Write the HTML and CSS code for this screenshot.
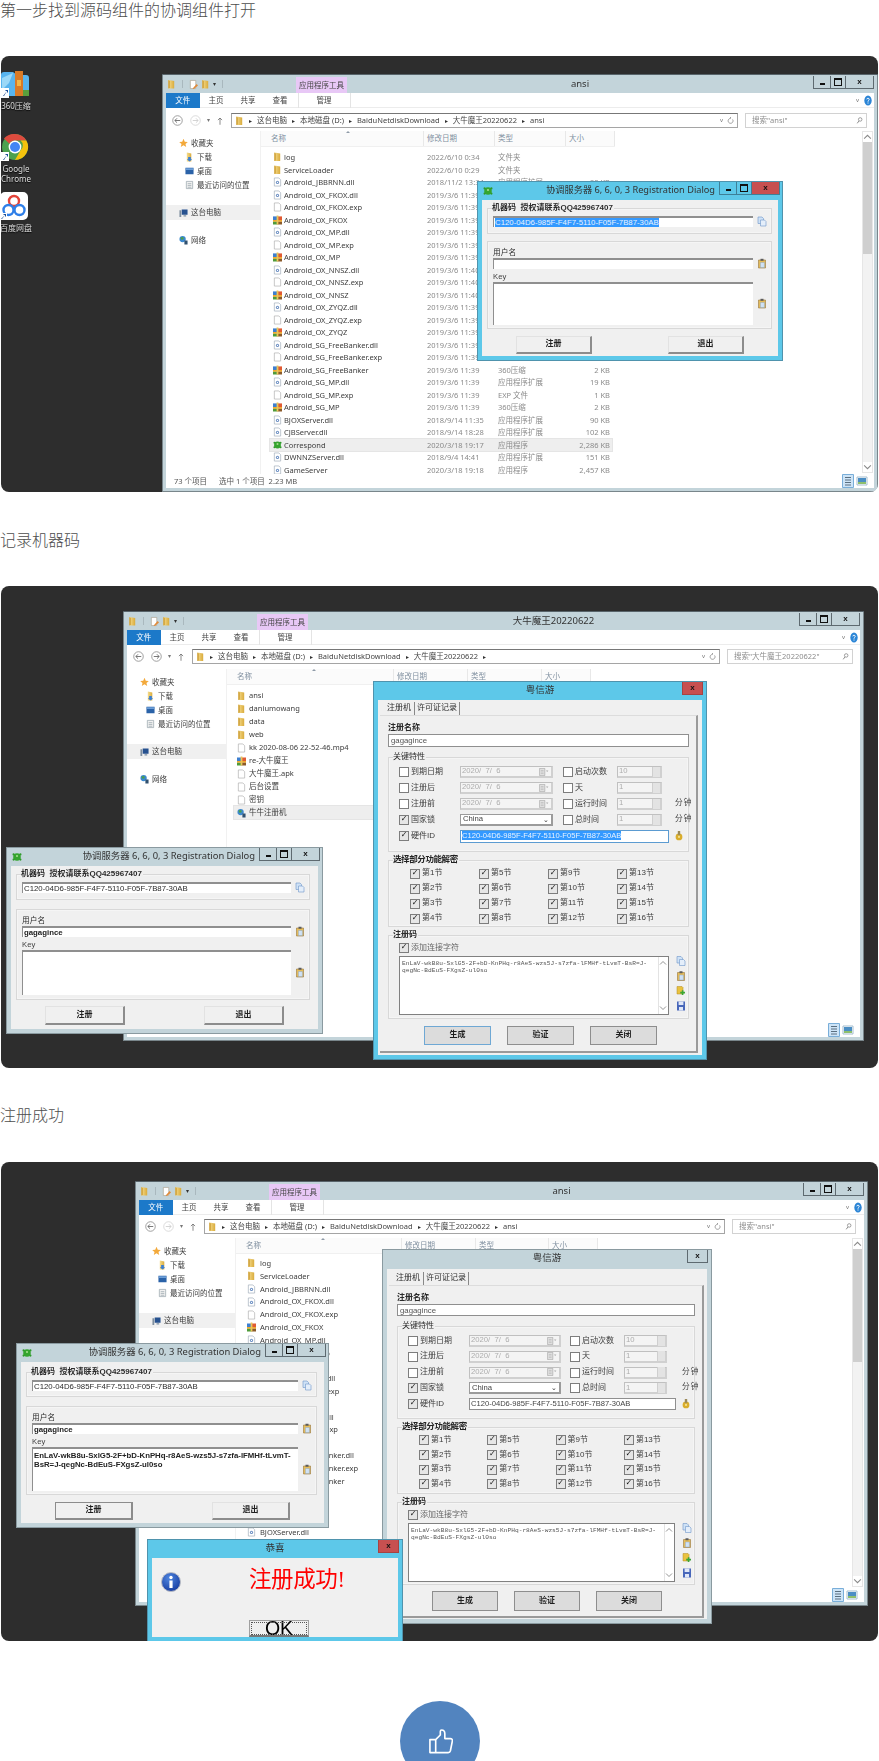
FILE: index.html
```html
<!DOCTYPE html>
<html lang="zh">
<head>
<meta charset="utf-8">
<title>协调组件注册</title>
<link rel="stylesheet" href="styles.css">
</head>
<body>
<svg class="defs" width="0" height="0" aria-hidden="true">
  <defs>
    <linearGradient id="gf" x1="0" x2="1" y1="0" y2="0"><stop offset="0" stop-color="#f6dd8e"/><stop offset="1" stop-color="#d9ab3c"/></linearGradient>
    <radialGradient id="gi" cx=".4" cy=".3" r=".8"><stop offset="0" stop-color="#4f86e0"/><stop offset="1" stop-color="#12369a"/></radialGradient>
    <symbol id="folder" viewBox="0 0 10 10"><path fill="url(#gf)" d="M1.5 0 8 1v8.5H1.5z"/><path fill="#c9982e" d="M1.5 0v9.5L3 9V1z"/></symbol>
    <symbol id="dll" viewBox="0 0 10 10"><path fill="#fff" stroke="#9aa7b5" stroke-width=".7" d="M1.5.5h5l2 2v7h-7z"/><circle cx="5" cy="5.5" r="1.8" fill="#6d90c4"/><circle cx="5" cy="5.5" r=".7" fill="#fff"/></symbol>
    <symbol id="file" viewBox="0 0 10 10"><path fill="#fff" stroke="#a9a9a9" stroke-width=".7" d="M1.5.5h5l2 2v7h-7z"/></symbol>
    <symbol id="zip" viewBox="0 0 10 10"><path fill="#3d7fd0" d="M0 1h5v4H0z"/><path fill="#e05a33" d="M5 1h5v4H5z"/><path fill="#f0a92d" d="M0 5h10v2H0z"/><path fill="#4f9b3a" d="M0 7h5v3H0z"/><path fill="#8a5a2a" d="M5 7h5v3H5z"/><path fill="#e9c65a" d="M4 0h2v10H4z"/></symbol>
    <symbol id="turtle" viewBox="0 0 10 10"><circle cx="5" cy="5" r="3.8" fill="#35a52e"/><circle cx="1.6" cy="2.4" r="1.1" fill="#2f9a2a"/><circle cx="8.4" cy="2.4" r="1.1" fill="#2f9a2a"/><circle cx="1.6" cy="7.6" r="1.1" fill="#2f9a2a"/><circle cx="8.4" cy="7.6" r="1.1" fill="#2f9a2a"/><circle cx="5" cy="4" r="1.1" fill="#a5dd8e"/></symbol>
    <symbol id="paste" viewBox="0 0 10 10"><path fill="#e6bd5a" stroke="#97753a" stroke-width=".6" d="M1.5 1.5h7v8h-7z"/><path fill="#5c5c5c" d="M3.5.3h3v2h-3z"/><path fill="#cfe2f6" stroke="#7d9fc6" stroke-width=".4" d="M3.4 4h4v5h-4z"/></symbol>
    <symbol id="copy" viewBox="0 0 10 10"><path fill="#cfe2f6" stroke="#6d96c9" stroke-width=".6" d="M1 .5h4l1.5 1.5v5H1z"/><path fill="#e4eefa" stroke="#6d96c9" stroke-width=".6" d="M3.5 3.5h4L9 5v4.5H3.5z"/></symbol>
    <symbol id="addf" viewBox="0 0 10 10"><path fill="#e9c23f" stroke="#b28b22" stroke-width=".5" d="M1 .5h5l1 1V8H1z"/><path fill="#3ba635" d="M5.8 4.2h1.6v1.6H9v1.6H7.4V9H5.8V7.4H4.2V5.8h1.6z"/></symbol>
    <symbol id="save" viewBox="0 0 10 10"><path fill="#4867ba" d="M1 .5h8v9H1z"/><path fill="#dfe7f7" d="M2.6.5h4.8v3.4H2.6zM3 6h4v3.5H3z"/></symbol>
    <symbol id="key" viewBox="0 0 10 10"><circle cx="5" cy="6.4" r="3.4" fill="#d9ad2c"/><path fill="#9b8a5a" d="M3.8.4h2.4v4H3.8z"/><circle cx="5" cy="6.4" r="1.1" fill="#f3df8f"/></symbol>
    <symbol id="star" viewBox="0 0 10 10"><path fill="#f3a93b" d="m5 .3 1.4 3.2 3.4.3-2.6 2.2.8 3.4L5 7.6 2 9.400l.8-3.400L.2 3.800l3.400-.3z"/></symbol>
    <symbol id="dl" viewBox="0 0 10 10"><path fill="url(#gf)" d="M2 0 7 1v9H2z"/><path fill="#3a7fd3" d="M3.500 5h3v2.500H8L5 10 2 7.500h1.500z"/></symbol>
    <symbol id="desk" viewBox="0 0 10 10"><path fill="#2a62a8" d="M.5 1.500h9v7h-9z"/><path fill="#6d9fd8" d="M1 2h8v2H1z"/></symbol>
    <symbol id="recent" viewBox="0 0 10 10"><path fill="#f1f1f1" stroke="#8c9aa3" stroke-width=".7" d="M1.500 1h7v8h-7z"/><path stroke="#8c9aa3" stroke-width=".7" d="M3 3.500h4M3 5.500h4M3 7.500h4"/></symbol>
    <symbol id="pc" viewBox="0 0 10 10"><path fill="#26518f" d="M3 1h6.500v6H3z"/><path fill="#7f8f9f" d="M.5 2H2.500v7.500H.5zM5 7.500h3V9H5z"/></symbol>
    <symbol id="net" viewBox="0 0 10 10"><circle cx="4" cy="4" r="3.500" fill="#3c89cf"/><path fill="#4c9f45" d="M2 2h3v2.500H2z"/><path fill="#30506f" d="M6 5.500h3.500V10H6z"/></symbol>
    <symbol id="doc" viewBox="0 0 10 10"><path fill="#fff" stroke="#aa9f8d" stroke-width=".7" d="M1.500.5h6v9h-6z"/><path fill="#e08a3a" d="m4 9.500 4.500-5L10 6l-4.500 4z"/></symbol>
    <symbol id="back" viewBox="0 0 12 12"><circle cx="6" cy="6" r="5.200" fill="#fff" stroke="#8d8d8d" stroke-width=".9"/><path fill="none" stroke="#6d6d6d" stroke-width="1" d="M9 6H3.200M5.500 3.600 3.100 6l2.400 2.400"/></symbol>
    <symbol id="fwd" viewBox="0 0 12 12"><circle cx="6" cy="6" r="5.200" fill="#fff" stroke="#8d8d8d" stroke-width=".9"/><path fill="none" stroke="#6d6d6d" stroke-width="1" d="M3 6h5.800M6.500 3.600 8.900 6 6.500 8.400"/></symbol>
    <symbol id="fwdg" viewBox="0 0 12 12"><circle cx="6" cy="6" r="5.200" fill="#fff" stroke="#d5d5d5" stroke-width=".9"/><path fill="none" stroke="#d0d0d0" stroke-width="1" d="M3 6h5.800M6.500 3.600 8.900 6 6.500 8.400"/></symbol>
    <symbol id="up" viewBox="0 0 8 12"><path fill="none" stroke="#666" stroke-width="1" d="M4 11V2M1.200 4.800 4 2l2.800 2.800"/></symbol>
    <symbol id="refresh" viewBox="0 0 10 12"><path fill="none" stroke="#777" stroke-width="1" d="M8 4.500A3.500 3.500 0 1 1 5 3V1"/></symbol>
    <symbol id="lens" viewBox="0 0 10 12"><circle cx="6" cy="4.500" r="2.500" fill="none" stroke="#777"/><path stroke="#777" stroke-width="1.200" d="M4 6.800 1.800 10"/></symbol>
    <symbol id="qm" viewBox="0 0 10 14"><ellipse cx="5" cy="7" rx="4.600" ry="6.400" fill="#2b85d6"/><path fill="none" stroke="#fff" stroke-width="1.200" d="M3.500 5.500C3.500 3.700 6.500 3.700 6.500 5.500 6.500 7 5 6.800 5 8.500"/><path stroke="#fff" stroke-width="1.200" d="M5 9.500v1.300"/></symbol>
    <symbol id="vdet" viewBox="0 0 12 14"><path fill="#cde4f7" stroke="#79aed9" d="M.5.500h11v13H.5z"/><path stroke="#5a6f80" d="M3 3.500h6M3 6h6M3 8.500h6M3 11h6"/></symbol>
    <symbol id="vthumb" viewBox="0 0 12 14"><path fill="#fff" stroke="#a3bdcf" d="M1 3h10v8H1z"/><path fill="#4b8ec4" d="M2 4h8v6H2z"/><path fill="#8ebf6c" d="M2 8h8v2H2z"/></symbol>
    <symbol id="sa-up" viewBox="0 0 8 6"><path fill="none" stroke="#888" stroke-width=".9" d="M1 4.500 4 1.500l3 3"/></symbol>
    <symbol id="sa-dn" viewBox="0 0 8 6"><path fill="none" stroke="#888" stroke-width=".9" d="M1 1.500 4 4.500l3-3"/></symbol>
    <symbol id="cal" viewBox="0 0 12 10"><path fill="#e3e3e3" stroke="#999" stroke-width=".7" d="M.5.500h6.500v9H.5z"/><path stroke="#aaa" stroke-width=".7" d="M2 3h3.500M2 5h3.500M2 7h3.500"/><path fill="#aaa" d="m8.500 3 3 0L10 5z"/></symbol>
  </defs>
</svg>

<p class="para first">第一步找到源码组件的协调组件打开</p>

<figure class="shot shot-1">
  <div class="desk">
    <div class="dicon">
      <svg class="dglyph" viewBox="0 0 28 28"><path fill="#58b4ee" d="M0 5q0-3 3-3h9l4 3h9q3 0 3 3v15q0 3-3 3H3q-3 0-3-3z"/><path fill="#9bd8f7" d="M1 8 12 3l-4 10-7 7z"/><path fill="#d97a26" d="M14 1h8v25h-8z"/><path fill="#f2b545" d="M16 10h4v6h-4z"/><path fill="#5a9f3c" d="M22 20h6v6h-6z"/><path fill="#fff" d="M0 18h8v10H0z"/><path fill="#1d4f96" d="M2 26l4-5-2 0 1-1h2v2l-1 1v-2l-3 5z"/></svg>
      <span>360压缩</span>
    </div>
    <div class="dicon chrome">
      <svg class="dglyph" viewBox="0 0 28 28"><circle cx="14" cy="14" r="13" fill="#4ca14f"/><path fill="#dd4b3e" d="M14 1a13 13 0 0 1 11.300 6.500H14a6.500 6.500 0 0 0-5.600 3.200L3 5.500A13 13 0 0 1 14 1z"/><path fill="#f4c20d" d="M25.300 7.500A13 13 0 0 1 14 27l5.600-9.700a6.500 6.500 0 0 0 0-9.800z"/><circle cx="14" cy="14" r="6.400" fill="#fff"/><circle cx="14" cy="14" r="5" fill="#4285f4"/><path fill="#fff" d="M0 19h8v9H0z"/><path fill="#1d4f96" d="M2 27l4-5-2 0 1-1h2v2l-1 1v-2l-3 5z"/></svg>
      <span>Google<br>Chrome</span>
    </div>
    <div class="dicon baidu">
      <svg class="dglyph" viewBox="0 0 28 28"><rect width="28" height="28" rx="5" fill="#fff"/><circle cx="14" cy="9" r="5" fill="none" stroke="#e4443a" stroke-width="2.400"/><circle cx="8.500" cy="18" r="5" fill="none" stroke="#2f7fe8" stroke-width="2.400"/><circle cx="19.500" cy="18" r="5" fill="none" stroke="#2f7fe8" stroke-width="2.400"/><path fill="#fff" d="M0 21h7v7H0z"/><path fill="#1d4f96" d="M1 27l4-4-2 0 1-1h2v2l-1 1v-2l-3 4z"/></svg>
      <span>百度网盘</span>
    </div>
  </div>

  <section class="explorer ex1">
    <header class="ex-title">
      <div class="qat"><svg><use href="#folder"/></svg><i></i><svg><use href="#doc"/></svg><svg><use href="#folder"/></svg><b>▾</b><i></i></div>
      <div class="ctx">应用程序工具</div>
      <div class="ex-name">ansi</div>
      <div class="wc"><span class="min"></span><span class="max"></span><span class="cls">x</span></div>
    </header>
    <nav class="ribbon"><span class="rfile">文件</span><span class="ri">主页</span><span class="ri">共享</span><span class="ri">查看</span><span class="rtab">管理</span><span class="rend"><em>v</em><svg><use href="#qm"/></svg></span></nav>
    <div class="addr-row">
      <div class="nav"><svg class="nb"><use href="#back"/></svg><svg class="nb"><use href="#fwdg"/></svg><em>▾</em><svg class="nu"><use href="#up"/></svg></div>
      <div class="addr"><svg><use href="#folder"/></svg><span>这台电脑</span><span>本地磁盘 (D:)</span><span>BaiduNetdiskDownload</span><span>大牛魔王20220622</span><span>ansi</span><div class="addr-end"><em>v</em><svg><use href="#refresh"/></svg></div></div>
      <div class="search"><span>搜索"ansi"</span><svg><use href="#lens"/></svg></div>
    </div>
    <div class="ex-main">
      <aside class="side">
        <div><svg><use href="#star"/></svg>收藏夹</div>
        <div class="sub"><svg><use href="#dl"/></svg>下载</div>
        <div class="sub"><svg><use href="#desk"/></svg>桌面</div>
        <div class="sub"><svg><use href="#recent"/></svg>最近访问的位置</div>
        <div class="pc"><svg><use href="#pc"/></svg>这台电脑</div>
        <div class="netw"><svg><use href="#net"/></svg>网络</div>
      </aside>
      <div class="list">
        <div class="hd"><span>名称</span><span>修改日期</span><span>类型</span><span>大小</span></div>
        <div class="rows">
          <div class="row"><svg><use href="#folder"/></svg><span>log</span><span>2022/6/10 0:34</span><span>文件夹</span></div>
          <div class="row"><svg><use href="#folder"/></svg><span>ServiceLoader</span><span>2022/6/10 0:29</span><span>文件夹</span></div>
          <div class="row"><svg><use href="#dll"/></svg><span>Android_JBBRNN.dll</span><span>2018/11/2 13:34</span><span>应用程序扩展</span><span>90 KB</span></div>
          <div class="row"><svg><use href="#dll"/></svg><span>Android_OX_FKOX.dll</span><span>2019/3/6 11:39</span></div>
          <div class="row"><svg><use href="#file"/></svg><span>Android_OX_FKOX.exp</span><span>2019/3/6 11:39</span></div>
          <div class="row"><svg><use href="#zip"/></svg><span>Android_OX_FKOX</span><span>2019/3/6 11:39</span></div>
          <div class="row"><svg><use href="#dll"/></svg><span>Android_OX_MP.dll</span><span>2019/3/6 11:39</span></div>
          <div class="row"><svg><use href="#file"/></svg><span>Android_OX_MP.exp</span><span>2019/3/6 11:39</span></div>
          <div class="row"><svg><use href="#zip"/></svg><span>Android_OX_MP</span><span>2019/3/6 11:39</span></div>
          <div class="row"><svg><use href="#dll"/></svg><span>Android_OX_NNSZ.dll</span><span>2019/3/6 11:40</span></div>
          <div class="row"><svg><use href="#file"/></svg><span>Android_OX_NNSZ.exp</span><span>2019/3/6 11:40</span></div>
          <div class="row"><svg><use href="#zip"/></svg><span>Android_OX_NNSZ</span><span>2019/3/6 11:40</span></div>
          <div class="row"><svg><use href="#dll"/></svg><span>Android_OX_ZYQZ.dll</span><span>2019/3/6 11:39</span></div>
          <div class="row"><svg><use href="#file"/></svg><span>Android_OX_ZYQZ.exp</span><span>2019/3/6 11:39</span></div>
          <div class="row"><svg><use href="#zip"/></svg><span>Android_OX_ZYQZ</span><span>2019/3/6 11:39</span></div>
          <div class="row"><svg><use href="#dll"/></svg><span>Android_SG_FreeBanker.dll</span><span>2019/3/6 11:39</span></div>
          <div class="row"><svg><use href="#file"/></svg><span>Android_SG_FreeBanker.exp</span><span>2019/3/6 11:39</span></div>
          <div class="row"><svg><use href="#zip"/></svg><span>Android_SG_FreeBanker</span><span>2019/3/6 11:39</span><span>360压缩</span><span>2 KB</span></div>
          <div class="row"><svg><use href="#dll"/></svg><span>Android_SG_MP.dll</span><span>2019/3/6 11:39</span><span>应用程序扩展</span><span>19 KB</span></div>
          <div class="row"><svg><use href="#file"/></svg><span>Android_SG_MP.exp</span><span>2019/3/6 11:39</span><span>EXP 文件</span><span>1 KB</span></div>
          <div class="row"><svg><use href="#zip"/></svg><span>Android_SG_MP</span><span>2019/3/6 11:39</span><span>360压缩</span><span>2 KB</span></div>
          <div class="row"><svg><use href="#dll"/></svg><span>BJOXServer.dll</span><span>2018/9/14 11:35</span><span>应用程序扩展</span><span>90 KB</span></div>
          <div class="row"><svg><use href="#dll"/></svg><span>CJBServer.dll</span><span>2018/9/14 18:28</span><span>应用程序扩展</span><span>102 KB</span></div>
          <div class="row sel"><svg><use href="#turtle"/></svg><span>Correspond</span><span>2020/3/18 19:17</span><span>应用程序</span><span>2,286 KB</span></div>
          <div class="row"><svg><use href="#dll"/></svg><span>DWNNZServer.dll</span><span>2018/9/4 14:41</span><span>应用程序扩展</span><span>151 KB</span></div>
          <div class="row"><svg><use href="#dll"/></svg><span>GameServer</span><span>2020/3/18 19:18</span><span>应用程序</span><span>2,457 KB</span></div>
        </div>
      </div>
      <div class="sbar"><svg><use href="#sa-up"/></svg><div class="thumb"></div><svg><use href="#sa-dn"/></svg></div>
    </div>
    <footer class="status"><span>73 个项目</span><span>选中 1 个项目&nbsp; 2.23 MB</span><div class="views"><svg><use href="#vdet"/></svg><svg><use href="#vthumb"/></svg></div></footer>
  </section>

  <section class="dlg rd rd-a active">
    <header class="dlg-title"><svg><use href="#turtle"/></svg><h4>协调服务器 6, 6, 0, 3 Registration Dialog</h4><div class="wc"><span class="min"></span><span class="max"></span><span class="cls">x</span></div></header>
    <div class="rd-body">
      <div class="group g1"><b class="legend">机器码&nbsp; 授权请联系QQ425967407</b>
        <div class="line"><div class="in code"><mark>C120-04D6-985F-F4F7-5110-F05F-7B87-30AB</mark></div><svg><use href="#copy"/></svg></div>
      </div>
      <div class="group g2"><div class="lab">用户名</div>
        <div class="line"><div class="in"></div><svg><use href="#paste"/></svg></div>
        <div class="lab key">Key</div>
        <div class="line"><div class="in area"></div><svg><use href="#paste"/></svg></div>
      </div>
      <div class="btns"><button>注册</button><button>退出</button></div>
    </div>
  </section>
</figure>

<p class="para p2">记录机器码</p>

<figure class="shot shot-2">
  <section class="explorer ex2">
    <header class="ex-title">
      <div class="qat"><svg><use href="#folder"/></svg><i></i><svg><use href="#doc"/></svg><svg><use href="#folder"/></svg><b>▾</b><i></i></div>
      <div class="ctx">应用程序工具</div>
      <div class="ex-name">大牛魔王20220622</div>
      <div class="wc"><span class="min"></span><span class="max"></span><span class="cls">x</span></div>
    </header>
    <nav class="ribbon"><span class="rfile">文件</span><span class="ri">主页</span><span class="ri">共享</span><span class="ri">查看</span><span class="rtab">管理</span><span class="rend"><em>v</em><svg><use href="#qm"/></svg></span></nav>
    <div class="addr-row">
      <div class="nav"><svg class="nb"><use href="#back"/></svg><svg class="nb"><use href="#fwd"/></svg><em>▾</em><svg class="nu"><use href="#up"/></svg></div>
      <div class="addr"><svg><use href="#folder"/></svg><span>这台电脑</span><span>本地磁盘 (D:)</span><span>BaiduNetdiskDownload</span><span>大牛魔王20220622</span><span>&nbsp;</span><div class="addr-end"><em>v</em><svg><use href="#refresh"/></svg></div></div>
      <div class="search"><span>搜索"大牛魔王20220622"</span><svg><use href="#lens"/></svg></div>
    </div>
    <div class="ex-main">
      <aside class="side">
        <div><svg><use href="#star"/></svg>收藏夹</div>
        <div class="sub"><svg><use href="#dl"/></svg>下载</div>
        <div class="sub"><svg><use href="#desk"/></svg>桌面</div>
        <div class="sub"><svg><use href="#recent"/></svg>最近访问的位置</div>
        <div class="pc"><svg><use href="#pc"/></svg>这台电脑</div>
        <div class="netw"><svg><use href="#net"/></svg>网络</div>
      </aside>
      <div class="list">
        <div class="hd"><span>名称</span><span>修改日期</span><span>类型</span><span>大小</span></div>
        <div class="rows">
          <div class="row"><svg><use href="#folder"/></svg><span>ansi</span></div>
          <div class="row"><svg><use href="#folder"/></svg><span>daniumowang</span></div>
          <div class="row"><svg><use href="#folder"/></svg><span>data</span></div>
          <div class="row"><svg><use href="#folder"/></svg><span>web</span></div>
          <div class="row"><svg><use href="#file"/></svg><span>kk 2020-08-06 22-52-46.mp4</span></div>
          <div class="row"><svg><use href="#zip"/></svg><span>re-大牛魔王</span></div>
          <div class="row"><svg><use href="#file"/></svg><span>大牛魔王.apk</span></div>
          <div class="row"><svg><use href="#file"/></svg><span>后台设置</span></div>
          <div class="row"><svg><use href="#file"/></svg><span>密钥</span></div>
          <div class="row sel"><svg><use href="#net"/></svg><span>牛牛注册机</span></div>
        </div>
      </div>
    </div>
    <footer class="status"><div class="views"><svg><use href="#vdet"/></svg><svg><use href="#vthumb"/></svg></div></footer>
  </section>

  <section class="dlg yx yx-a active">
    <header class="yx-title"><h4>粤信游</h4><span class="cls">x</span></header>
    <div class="yx-body">
      <div class="tabs"><span class="on">注册机</span><span>许可证记录</span></div>
      <div class="panel">
        <b class="fld">注册名称</b>
        <div class="in nm">gagagince</div>
        <div class="group feat"><span class="legend">关键特性</span>
          <label class="ck">到期日期</label><div class="date">2020/ &nbsp;7/ &nbsp;6<svg><use href="#cal"/></svg></div><label class="ck">启动次数</label><div class="spin">10<em></em></div><span></span>
          <label class="ck">注册后</label><div class="date">2020/ &nbsp;7/ &nbsp;6<svg><use href="#cal"/></svg></div><label class="ck">天</label><div class="spin">1<em></em></div><span></span>
          <label class="ck">注册前</label><div class="date">2020/ &nbsp;7/ &nbsp;6<svg><use href="#cal"/></svg></div><label class="ck">运行时间</label><div class="spin">1<em></em></div><span class="mins">分钟</span>
          <label class="ck on">国家锁</label><div class="date sel">China<u>⌄</u></div><label class="ck">总时间</label><div class="spin">1<em></em></div><span class="mins">分钟</span>
          <label class="ck on">硬件ID</label><div class="in hw focus"><mark>C120-04D6-985F-F4F7-5110-F05F-7B87-30AB</mark></div><svg class="keyi"><use href="#key"/></svg>
        </div>
        <div class="group secs"><span class="legend">选择部分功能解密</span>
          <label class="ck on">第1节</label><label class="ck on">第5节</label><label class="ck on">第9节</label><label class="ck on">第13节</label>
          <label class="ck on">第2节</label><label class="ck on">第6节</label><label class="ck on">第10节</label><label class="ck on">第14节</label>
          <label class="ck on">第3节</label><label class="ck on">第7节</label><label class="ck on">第11节</label><label class="ck on">第15节</label>
          <label class="ck on">第4节</label><label class="ck on">第8节</label><label class="ck on">第12节</label><label class="ck on">第16节</label>
        </div>
        <div class="group code-g"><b class="legend">注册码</b>
          <label class="ck on">添加连接字符</label>
          <div class="code-row">
            <div class="in mono">EnLaV-wkB8u-SxlG5-2F+bD-KnPHq-r8AeS-wzs5J-s7zfa-lFMHf-tLvmT-BsR=J-<br>qegNc-BdEuS-FXgsZ-ul0so<div class="vs"><svg><use href="#sa-up"/></svg><svg><use href="#sa-dn"/></svg></div></div>
            <div class="tools"><svg><use href="#copy"/></svg><svg><use href="#paste"/></svg><svg><use href="#addf"/></svg><svg><use href="#save"/></svg></div>
          </div>
        </div>
        <div class="yx-btns"><button class="def">生成</button><button>验证</button><button>关闭</button></div>
      </div>
    </div>
  </section>

  <section class="dlg rd rd-b">
    <header class="dlg-title"><svg><use href="#turtle"/></svg><h4>协调服务器 6, 6, 0, 3 Registration Dialog</h4><div class="wc"><span class="min"></span><span class="max"></span><span class="cls">x</span></div></header>
    <div class="rd-body">
      <div class="group g1"><b class="legend">机器码&nbsp; 授权请联系QQ425967407</b>
        <div class="line"><div class="in code">C120-04D6-985F-F4F7-5110-F05F-7B87-30AB</div><svg><use href="#copy"/></svg></div>
      </div>
      <div class="group g2"><div class="lab">用户名</div>
        <div class="line"><div class="in strong">gagagince</div><svg><use href="#paste"/></svg></div>
        <div class="lab key">Key</div>
        <div class="line"><div class="in area"></div><svg><use href="#paste"/></svg></div>
      </div>
      <div class="btns"><button>注册</button><button>退出</button></div>
    </div>
  </section>
</figure>

<p class="para p3">注册成功</p>

<figure class="shot shot-3">
  <section class="explorer ex3">
    <header class="ex-title">
      <div class="qat"><svg><use href="#folder"/></svg><i></i><svg><use href="#doc"/></svg><svg><use href="#folder"/></svg><b>▾</b><i></i></div>
      <div class="ctx">应用程序工具</div>
      <div class="ex-name">ansi</div>
      <div class="wc"><span class="min"></span><span class="max"></span><span class="cls">x</span></div>
    </header>
    <nav class="ribbon"><span class="rfile">文件</span><span class="ri">主页</span><span class="ri">共享</span><span class="ri">查看</span><span class="rtab">管理</span><span class="rend"><em>v</em><svg><use href="#qm"/></svg></span></nav>
    <div class="addr-row">
      <div class="nav"><svg class="nb"><use href="#back"/></svg><svg class="nb"><use href="#fwdg"/></svg><em>▾</em><svg class="nu"><use href="#up"/></svg></div>
      <div class="addr"><svg><use href="#folder"/></svg><span>这台电脑</span><span>本地磁盘 (D:)</span><span>BaiduNetdiskDownload</span><span>大牛魔王20220622</span><span>ansi</span><div class="addr-end"><em>v</em><svg><use href="#refresh"/></svg></div></div>
      <div class="search"><span>搜索"ansi"</span><svg><use href="#lens"/></svg></div>
    </div>
    <div class="ex-main">
      <aside class="side">
        <div><svg><use href="#star"/></svg>收藏夹</div>
        <div class="sub"><svg><use href="#dl"/></svg>下载</div>
        <div class="sub"><svg><use href="#desk"/></svg>桌面</div>
        <div class="sub"><svg><use href="#recent"/></svg>最近访问的位置</div>
        <div class="pc"><svg><use href="#pc"/></svg>这台电脑</div>
        <div class="netw"><svg><use href="#net"/></svg>网络</div>
      </aside>
      <div class="list">
        <div class="hd"><span>名称</span><span>修改日期</span><span>类型</span><span>大小</span></div>
        <div class="rows">
          <div class="row"><svg><use href="#folder"/></svg><span>log</span></div>
          <div class="row"><svg><use href="#folder"/></svg><span>ServiceLoader</span></div>
          <div class="row"><svg><use href="#dll"/></svg><span>Android_JBBRNN.dll</span></div>
          <div class="row"><svg><use href="#dll"/></svg><span>Android_OX_FKOX.dll</span></div>
          <div class="row"><svg><use href="#file"/></svg><span>Android_OX_FKOX.exp</span></div>
          <div class="row"><svg><use href="#zip"/></svg><span>Android_OX_FKOX</span></div>
          <div class="row"><svg><use href="#dll"/></svg><span>Android_OX_MP.dll</span></div>
          <div class="row"><svg><use href="#file"/></svg><span>Android_OX_MP.exp</span></div>
          <div class="row"><svg><use href="#zip"/></svg><span>Android_OX_MP</span></div>
          <div class="row"><svg><use href="#dll"/></svg><span>Android_OX_NNSZ.dll</span></div>
          <div class="row"><svg><use href="#file"/></svg><span>Android_OX_NNSZ.exp</span></div>
          <div class="row"><svg><use href="#zip"/></svg><span>Android_OX_NNSZ</span></div>
          <div class="row"><svg><use href="#dll"/></svg><span>Android_OX_ZYQZ.dll</span></div>
          <div class="row"><svg><use href="#file"/></svg><span>Android_OX_ZYQZ.exp</span></div>
          <div class="row"><svg><use href="#zip"/></svg><span>Android_OX_ZYQZ</span></div>
          <div class="row"><svg><use href="#dll"/></svg><span>Android_SG_FreeBanker.dll</span></div>
          <div class="row"><svg><use href="#file"/></svg><span>Android_SG_FreeBanker.exp</span></div>
          <div class="row"><svg><use href="#zip"/></svg><span>Android_SG_FreeBanker</span></div>
          <div class="row"><svg><use href="#dll"/></svg><span>Android_SG_MP.dll</span></div>
          <div class="row"><svg><use href="#file"/></svg><span>Android_SG_MP.exp</span></div>
          <div class="row"><svg><use href="#zip"/></svg><span>Android_SG_MP</span></div>
          <div class="row"><svg><use href="#dll"/></svg><span>BJOXServer.dll</span></div>
        </div>
      </div>
      <div class="sbar"><svg><use href="#sa-up"/></svg><div class="thumb"></div><svg><use href="#sa-dn"/></svg></div>
    </div>
    <footer class="status"><div class="views"><svg><use href="#vdet"/></svg><svg><use href="#vthumb"/></svg></div></footer>
  </section>

  <section class="dlg yx yx-b">
    <header class="yx-title"><h4>粤信游</h4><span class="cls">x</span></header>
    <div class="yx-body">
      <div class="tabs"><span class="on">注册机</span><span>许可证记录</span></div>
      <div class="panel">
        <b class="fld">注册名称</b>
        <div class="in nm">gagagince</div>
        <div class="group feat"><span class="legend">关键特性</span>
          <label class="ck">到期日期</label><div class="date">2020/ &nbsp;7/ &nbsp;6<svg><use href="#cal"/></svg></div><label class="ck">启动次数</label><div class="spin">10<em></em></div><span></span>
          <label class="ck">注册后</label><div class="date">2020/ &nbsp;7/ &nbsp;6<svg><use href="#cal"/></svg></div><label class="ck">天</label><div class="spin">1<em></em></div><span></span>
          <label class="ck">注册前</label><div class="date">2020/ &nbsp;7/ &nbsp;6<svg><use href="#cal"/></svg></div><label class="ck">运行时间</label><div class="spin">1<em></em></div><span class="mins">分钟</span>
          <label class="ck on">国家锁</label><div class="date sel">China<u>⌄</u></div><label class="ck">总时间</label><div class="spin">1<em></em></div><span class="mins">分钟</span>
          <label class="ck on">硬件ID</label><div class="in hw">C120-04D6-985F-F4F7-5110-F05F-7B87-30AB</div><svg class="keyi"><use href="#key"/></svg>
        </div>
        <div class="group secs"><span class="legend">选择部分功能解密</span>
          <label class="ck on">第1节</label><label class="ck on">第5节</label><label class="ck on">第9节</label><label class="ck on">第13节</label>
          <label class="ck on">第2节</label><label class="ck on">第6节</label><label class="ck on">第10节</label><label class="ck on">第14节</label>
          <label class="ck on">第3节</label><label class="ck on">第7节</label><label class="ck on">第11节</label><label class="ck on">第15节</label>
          <label class="ck on">第4节</label><label class="ck on">第8节</label><label class="ck on">第12节</label><label class="ck on">第16节</label>
        </div>
        <div class="group code-g"><b class="legend">注册码</b>
          <label class="ck on">添加连接字符</label>
          <div class="code-row">
            <div class="in mono">EnLaV-wkB8u-SxlG5-2F+bD-KnPHq-r8AeS-wzs5J-s7zfa-lFMHf-tLvmT-BsR=J-<br>qegNc-BdEuS-FXgsZ-ul0so<div class="vs"><svg><use href="#sa-up"/></svg><svg><use href="#sa-dn"/></svg></div></div>
            <div class="tools"><svg><use href="#copy"/></svg><svg><use href="#paste"/></svg><svg><use href="#addf"/></svg><svg><use href="#save"/></svg></div>
          </div>
        </div>
        <div class="yx-btns"><button>生成</button><button>验证</button><button>关闭</button></div>
      </div>
    </div>
  </section>

  <section class="dlg rd rd-c">
    <header class="dlg-title"><svg><use href="#turtle"/></svg><h4>协调服务器 6, 6, 0, 3 Registration Dialog</h4><div class="wc"><span class="min"></span><span class="max"></span><span class="cls">x</span></div></header>
    <div class="rd-body">
      <div class="group g1"><b class="legend">机器码&nbsp; 授权请联系QQ425967407</b>
        <div class="line"><div class="in code">C120-04D6-985F-F4F7-5110-F05F-7B87-30AB</div><svg><use href="#copy"/></svg></div>
      </div>
      <div class="group g2"><div class="lab">用户名</div>
        <div class="line"><div class="in strong">gagagince</div><svg><use href="#paste"/></svg></div>
        <div class="lab key">Key</div>
        <div class="line"><div class="in area strong">EnLaV-wkB8u-SxlG5-2F+bD-KnPHq-r8AeS-wzs5J-s7zfa-lFMHf-tLvmT-<br>BsR=J-qegNc-BdEuS-FXgsZ-ul0so</div><svg><use href="#paste"/></svg></div>
      </div>
      <div class="btns"><button class="def">注册</button><button>退出</button></div>
    </div>
  </section>

  <section class="dlg ok active">
    <header class="yx-title"><h4>恭喜</h4><span class="cls">x</span></header>
    <div class="ok-body">
      <svg class="info" viewBox="0 0 20 20"><circle cx="10" cy="10" r="9.500" fill="url(#gi)" stroke="#b9bcc4"/><circle cx="10" cy="5.500" r="1.700" fill="#fff"/><path fill="#fff" d="M8.400 8.500h3.200v7.500H8.400z"/></svg>
      <div class="ok-msg">注册成功!</div>
      <button class="ok-btn"><span>OK</span></button>
    </div>
  </section>
</figure>

<button class="like" aria-label="点赞">
  <svg viewBox="0 0 26 26"><path fill="none" stroke="#fff" stroke-width="1.700" stroke-linejoin="round" d="M8 11v13.500H2V11zM8 11l4.800-4.800V2.500c0-.8.500-1.500 1.400-1.500 2 0 3.300 1.800 3.300 4v5h5.700c1.500 0 2.400 1.200 2.100 2.600l-2 10c-.3 1.200-1 1.900-2.300 1.900H8"/></svg>
</button>
</body>
</html>
```

FILE: styles.css
```css
* { box-sizing: border-box; }
html, body { margin: 0; padding: 0; }
body {
  width: 879px;
  height: 1761px;
  overflow: hidden;
  background: #fff;
  font-family: "Noto Sans", "Noto Sans CJK SC", sans-serif;
}
.defs { position: absolute; }
.para {
  margin: 39px 0 37px;
  height: 18px;
  font: 300 16px/18px "Noto Sans CJK SC", sans-serif;
  color: #4d4d4d;
}
.para.first { margin-top: 0; margin-bottom: 38px; }
.para.p2 { margin-top: 38px; margin-bottom: 38px; }
.para.p3 { margin-top: 37px; margin-bottom: 39px; }

.shot {
  position: relative;
  margin: 0 0 0 1px;
  width: 877px;
  background: #2d2d2d;
  border-radius: 8px;
  overflow: hidden;
  filter: blur(.4px);
  font: 7.5px/1.1 "Noto Sans", "Noto Sans CJK SC", sans-serif;
  color: #333;
}
.shot-1 { height: 436px; }
.shot-2 { height: 482px; }
.shot-3 { height: 479px; }
svg { display: block; }

/* desktop */
.desk {
  position: absolute;
  left: 0;
  top: 14px;
  width: 30px;
  display: flex;
  flex-direction: column;
  align-items: center;
  color: #dedede;
  text-shadow: 0 1px 1px #000;
  font-size: 8px;
  line-height: 10px;
  text-align: center;
}
.dicon { height: 61px; }
.dicon span { display: block; white-space: nowrap; margin-top: 3px; }
.dglyph { width: 28px; height: 28px; }
.chrome { height: 61px; padding-top: 2px; }
.baidu { padding-top: 0; }

/* explorer */
.explorer {
  position: absolute;
  display: flex;
  flex-direction: column;
  background: #fff;
  border: solid #c3d4da;
  border-width: 0 4px 4px;
  outline: 1px solid rgba(60, 70, 75, .55);
  outline-offset: -1px;
}
.ex1 { left: 161px; top: 18px; width: 716px; height: 418px;
  --side: 95px; --hc: 163px 71px 71px 49px; --c: 11px 143px 71px 68px 44px; --rh: 12.5px; --lp: 4.7px; --pl: 3px; --ml: 9px;
  --a1: 5px; --a2: 3px; --sw: 122px; --mr: 7px; --sp: 5px; --thumb: 112px; --sbr: 1px; }
.ex2 { left: 122px; top: 25px; width: 741px; height: 430px;
  --side: 100px; --hc: 167px 74px 74px 49px; --c: 12px 300px; --rh: 13px; --lp: 4.500px; --pl: 3px; --ml: 7px;
  --a1: 4px; --a2: 5px; --sw: 126px; --mr: 7px; --sp: 6px; }
.ex3 { left: 134px; top: 19px; width: 733px; height: 425px;
  --side: 97px; --hc: 166px 74px 73px 49px; --c: 13px 300px; --rh: 12.8px; --lp: 3.600px; --pl: 3px; --ml: 8px;
  --a1: 4px; --a2: 4px; --sw: 124px; --mr: 8px; --sp: 6px; --thumb: 113px; --sbr: 1px; }

.ex-title {
  display: flex;
  height: 19px;
  margin: 0 -4px;
  padding-left: 5px;
  background: #c3d4da;
  border-top: 1px solid #7b8a90;
  align-items: flex-start;
}
.qat { width: 129px; height: 18px; display: flex; align-items: center; gap: 3px; }
.qat svg { width: 9px; height: 11px; }
.qat i { width: 1px; height: 8px; margin: 0 3px; background: #a9b8be; }
.qat b { font-size: 6px; font-weight: 400; color: #333; }
.ctx {
  width: 51px;
  height: 16px;
  margin-top: 2px;
  background: #e8c8f6;
  text-align: center;
  line-height: 16px;
  color: #444;
  white-space: nowrap;
}
.ex-name { flex: 1; text-align: center; font-size: 9.500px; line-height: 17px; color: #333; }

.wc {
  display: flex;
  height: 13px;
  margin-top: 1px;
  margin-right: 4px;
  border: solid #5e6a70;
  border-width: 0 1px 1px;
}
.wc span { display: flex; align-items: center; justify-content: center; height: 100%; }
.wc .min { width: 17px; border-right: 1px solid #5e6a70; }
.wc .min::before { content: ""; width: 5px; height: 2px; background: #111; margin-top: 3px; }
.wc .max { width: 15px; border-right: 1px solid #5e6a70; }
.wc .max::before { content: ""; width: 6px; height: 5px; border: 1px solid #111; border-top-width: 2px; }
.wc .cls { width: 27px; font: 700 8px/1 "Liberation Sans", sans-serif; color: #111; }

.ribbon {
  display: flex;
  height: 15px;
  align-items: center;
  border-bottom: 1px solid #ececec;
  font-size: 7.500px;
  color: #444;
}
.rfile {
  width: 33.500px;
  height: 15px;
  background: #1c79c9;
  color: #fff;
  text-align: center;
  line-height: 14px;
}
.ri { margin-left: 9px; margin-right: 8px; width: 15px; white-space: nowrap; }
.rtab {
  width: 53px;
  height: 15px;
  margin-left: 2px;
  border: solid #e4e4e4;
  border-width: 0 1px;
  text-align: center;
  line-height: 15px;
}
.rend { margin-left: auto; display: flex; align-items: center; gap: 5px; padding-right: 2px; color: #888; }
.rend em, .nav em, .addr-end em { font-style: normal; font-size: 6px; color: #777; }
.rend svg { width: 8px; height: 13px; }

.addr-row { display: flex; padding: var(--a1) var(--mr) var(--a2) 0; }
.nav { width: 65px; display: flex; align-items: center; padding-left: 6px; }
.nav .nb { width: 11px; height: 11px; margin-right: 7px; }
.nav .nb + em { margin-left: -1px; }
.nav em { margin-right: 7px; }
.nu { width: 6px; height: 10px; }
.addr {
  flex: 1;
  height: 15px;
  display: flex;
  align-items: center;
  border: 1px solid #a5a5a5;
  border-top-color: #777;
  padding-left: 3px;
  color: #444;
}
.addr > svg { width: 9px; height: 12px; margin-right: 5px; }
.addr span { white-space: nowrap; }
.addr span:not(:empty)::before { content: "▸"; font-size: 6px; margin-right: 5px; color: #333; }
.addr span + span { margin-left: 5px; }
.addr-end { margin-left: auto; display: flex; align-items: center; gap: 4px; padding-right: 3px; }
.addr-end svg { width: 7px; height: 9px; }
.search {
  width: var(--sw);
  height: 15px;
  margin-left: 7px;
  display: flex;
  align-items: center;
  justify-content: space-between;
  border: 1px solid #d2d2d2;
  padding: 0 3px 0 6px;
  color: #8d8d8d;
}
.search svg { width: 7px; height: 9px; }

.ex-main { flex: 1; min-height: 0; display: flex; }
.side { width: var(--side); padding-top: var(--sp); flex: none; border-right: 1px solid #f1f1f1; }
.side div {
  height: 14px;
  display: flex;
  align-items: center;
  gap: 3px;
  padding-left: 13px;
  white-space: nowrap;
  color: #3d3d3d;
}
.side svg { width: 9px; height: 10px; }
.side .sub { padding-left: 19px; }
.side .pc { margin-top: 13px; height: 15px; background: #f0f0f0; }
.side .netw { margin-top: 13px; }

.list { flex: 1; min-width: 0; overflow: hidden; }
.hd {
  position: relative;
  display: grid;
  grid-template-columns: var(--hc);
  width: max-content;
  height: 15.500px;
  background: #fbfbfb;
  border-bottom: 1px solid #f0f0f0;
  color: #8090a0;
  line-height: 14px;
}
.hd span { border-right: 1px solid #e8e8e8; padding-left: 3px; }
.hd span:first-child { padding-left: 10px; }
.hd::before {
  content: "";
  position: absolute;
  left: 85px;
  top: 0;
  border: 2px solid transparent;
  border-top-width: 0;
  border-bottom-color: #8f9ba8;
}
.rows { padding-top: var(--lp); }
.row {
  display: grid;
  grid-template-columns: var(--c);
  grid-auto-flow: column;
  justify-content: start;
  width: max-content;
  height: var(--rh);
  margin-left: var(--ml);
  padding-left: var(--pl);
  padding-right: 2px;
  align-items: center;
  white-space: nowrap;
  color: #3c3c3c;
  line-height: var(--rh);
}
.row svg { width: 9px; height: 10px; }
.row span + span { color: #8a8a8a; }
.row span:nth-child(5) { text-align: right; }
.row.sel { background: #eeeeee; outline: 1px solid #e5e5e5; }
.ex2 .row.sel { width: 400px; }

.sbar {
  width: 11px;
  margin-right: var(--sbr, 0);
  display: flex;
  flex-direction: column;
  align-items: stretch;
  background: #f2f2f2;
  border: 1px solid #e6e6e6;
  margin-bottom: 1px;
}
.sbar svg { width: 9px; height: 10px; flex: none; background: #fff; }
.sbar svg:last-child { margin-top: auto; }
.thumb { height: var(--thumb); background: #cfcfcf; }

.status {
  display: flex;
  height: 14px;
  align-items: center;
  gap: 12px;
  padding-left: 8px;
  color: #555;
}
.views { margin-left: auto; display: flex; gap: 2px; margin-right: 6px; }
.views svg { width: 12px; height: 14px; }

/* dialogs */
.dlg {
  position: absolute;
  display: flex;
  flex-direction: column;
  background: #c3d4da;
  border: 1px solid #8a9aa0;
  font: 7.700px/1.1 "Liberation Sans", "Noto Sans CJK SC", sans-serif;
  color: #2b2b2b;
}
.dlg.active { background: #5dc8e9; border-color: #4f93ad; }
.dlg h4 { margin: 0; font: 400 9.400px/1 "Noto Sans", "Noto Sans CJK SC", sans-serif; color: #333; }
.rd-a h4 { font-size: 9.200px; }
.group { border: 1px solid #d8d8d8; box-shadow: inset 0 0 0 1px #f5f5f5; position: relative; }
.legend {
  position: absolute;
  top: -5px;
  left: 4px;
  background: #f0f0f0;
  padding-right: 1px;
  white-space: nowrap;
  font-size: 8px;
}
.in {
  background: #fff;
  border: solid #8f8f8f;
  border-width: 2px 0 0 1px;
  padding-left: 1px;
  white-space: nowrap;
  font-size: 7.800px;
  line-height: 9px;
}
.strong { font-weight: 700; color: #222; }
mark { background: #3399ff; color: #e8f3ff; }

.rd-a { left: 476px; top: 125px; width: 306px; height: 180px; --ti: 18px; --gapt: 8px; --g2: 88px; --g1: 26px; --ggap: 7px; --bt: 7px; --bw: 76px; --bh: 18px; --bgap: 76px; --bl: 29px; --gr: 6px; --gl: 5px; --ipad: 5px; --ir: 18px; --ih: 11px; --at: 43px; --tw: 7.600px; }
.rd-b { left: 5px; top: 261px; width: 317px; height: 187px; --ti: 18px; --gapt: 8px; --g2: 91px; --g1: 26px; --ggap: 9px; --bt: 6px; --bw: 80px; --bh: 19px; --bgap: 79px; --bl: 29px; --gr: 8px; --gl: 5px; --ipad: 5px; --ir: 18px; --ih: 11px; --at: 45px; }
.rd-c { left: 15px; top: 181px; width: 313px; height: 185px; --ti: 18px; --gapt: 10px; --g2: 89px; --g1: 25px; --ggap: 9px; --bt: 7px; --bw: 78px; --bh: 18px; --bgap: 79px; --bl: 29px; --gr: 7px; --gl: 5px; --ipad: 5px; --ir: 18px; --ih: 11px; --at: 44px; }
.dlg-title { display: flex; align-items: flex-start; height: var(--ti); padding-left: 5px; }
.dlg-title > svg { width: 10px; height: 10px; margin-top: 4px; }
.dlg-title h4 { margin-left: auto; margin-right: 4px; margin-top: 3px; white-space: nowrap; }
.dlg .wc { margin-right: 2px; margin-top: 0; }
.dlg.active .wc { border-color: #3e7f97; }
.dlg.active .wc .min, .dlg.active .wc .max { border-color: #3e7f97; }
.dlg.active .wc .cls { background: #c75050; }
.rd-body {
  flex: 1;
  margin: 0 4px 4px;
  padding: var(--gapt) var(--gr) 0 var(--gl);
  background: #f0f0f0;
  display: flex;
  flex-direction: column;
}
.g1 { height: var(--g1); padding: 7px 0 0 var(--ipad); }
.g2 { height: var(--g2); margin-top: var(--ggap); padding: 5px 0 0 var(--ipad); }
.line { display: flex; align-items: center; gap: 4px; }
.line .in { flex: 1; height: var(--ih); }
.line svg { width: 10px; height: 11px; margin-right: 4px; }
.lab { height: 11px; line-height: 11px; }
.lab.key { margin-top: 1px; height: 12px; color: #444; line-height: 13px; }
.line .in.area { height: var(--at); white-space: nowrap; line-height: 9px; padding-top: 2px; }
.btns { display: flex; gap: var(--bgap); padding: var(--bt) 0 0 var(--bl); }
button { font: inherit; color: #1f1f1f; padding: 0; }
.btns button {
  width: var(--bw);
  height: var(--bh);
  background: #f0f0f0;
  border: 1px solid #e2e2e2;
  border-right: 2px solid #8c8c8c;
  border-bottom: 2px solid #8c8c8c;
  font-weight: 700;
  font-size: 8px;
}
.btns .def { border: 1px solid #8c8c8c; border-bottom-width: 2px; border-right-width: 2px; }

/* yx */
.yx-a { left: 372px; top: 95px; width: 334px; height: 379px; --pt: 15px; --nm: 13px; --nmt: 13px; --fh: 95px; --row: 16px; --hw: 12px; --g2: 67px; --g3: 84px; --pitch: 69px; --sr: 15px; --bw: 67px; --bh: 19px; --bt: 7px; --bl: 44px; --cols: 61px 103px 54px 52px 20px; --dw: 93px; --spw: 45px; --ag: 59px; --pw: 318px; --ph: 338px; }
.yx-b { left: 381px; top: 87px; width: 330px; height: 375px; --pt: 16px; --nm: 12px; --nmt: 12px; --fh: 93px; --row: 15.750px; --hw: 12px; --g2: 67px; --g3: 83px; --pitch: 68.300px; --sr: 14.700px; --bw: 66px; --bh: 20px; --bt: 6px; --bl: 43px; --cols: 61px 101px 54px 52px 20px; --dw: 92px; --spw: 43px; --ag: 59px; --pw: 315px; --ph: 333px; }
.yx-title { position: relative; display: flex; justify-content: center; height: 18px; padding-top: 3px; flex: none; }
.yx-title h4 { font-size: 9.500px; }
.yx-title .cls {
  position: absolute;
  right: 3px;
  top: 0;
  width: 21px;
  height: 13px;
  border: 1px solid #5e6a70;
  border-top: 0;
  display: flex;
  align-items: center;
  justify-content: center;
  font: 700 8px/1 "Liberation Sans", sans-serif;
  color: #111;
}
.active .yx-title .cls { background: #c75050; border-color: #a64343; }
.yx-b .yx-title { height: 19px; }
.yx-body {
  flex: 1;
  margin: 0 4px 4px;
  padding-left: 2px;
  background: #f0f0f0;
  display: flex;
  flex-direction: column;
}
.tabs { height: var(--pt); display: flex; align-items: flex-end; padding-left: 5px; flex: none; }
.tabs span { height: 13px; line-height: 12px; padding: 0 2px; white-space: nowrap; font-size: 8px; }
.tabs .on { width: 29px; }
.tabs span:last-child { border: solid #888; border-width: 0 1px; }
.panel {
  width: var(--pw);
  height: var(--ph);
  border: solid #9a9a9a;
  border-width: 1px 2px 2px 0;
  border-top-color: #dcdcdc;
  padding: 7px 7px 0 8px;
}
.fld { display: block; height: 11px; line-height: 10px; font-size: 8px; }
.nm { height: var(--nm); border-width: 1px; border-color: #8f8f8f; padding-left: 2px; line-height: 11px; color: #555; }
.feat {
  height: var(--fh);
  margin-top: 10px;
  padding: 8px 0 0 10px;
  display: grid;
  grid-template-columns: var(--cols);
  grid-auto-rows: var(--row);
  align-items: start;
}
.ck { display: flex; align-items: center; height: 12px; white-space: nowrap; font-size: 8px; color: #3c3c3c; }
.ck::before {
  content: "";
  flex: none;
  display: block;
  width: 8px;
  height: 8px;
  margin-right: 2px;
  background: #fff;
  border: 1px solid #7d7d7d;
  color: #111;
  font: 700 8px/6px "DejaVu Sans", sans-serif;
  text-align: center;
}
.ck.on::before { content: "✓"; background: #e6e6e6; }
.date, .spin {
  height: 12px;
  display: flex;
  align-items: center;
  background: #f4f4f4;
  border: solid #adadad;
  border-width: 1px 2px 2px 1px;
  border-color: #c0c0c0 #d0d0d0 #d0d0d0 #c0c0c0;
  color: #adadad;
  padding-left: 1px;
  font-size: 7.700px;
  white-space: nowrap;
}
.date { width: var(--dw); position: relative; justify-content: flex-start; }
.date svg { width: 10px; height: 8px; margin-left: auto; margin-right: 2px; }
.date.sel { background: #fff; color: #444; border-color: #9b9b9b; padding-left: 2px; }
.date u { margin-left: auto; margin-right: 2px; text-decoration: none; color: #333; font-size: 7px; }
.spin { width: var(--spw); }
.spin em { margin-left: auto; width: 8px; height: 10px; background: #e3e3e3; border-left: 1px solid #cfcfcf; }
.mins { color: #444; margin-left: 6px; letter-spacing: 1px; white-space: nowrap; margin-top: 1px; }
.hw { grid-column: 2 / 5; height: 12px; border: 1px solid #8f8f8f; border-width: 1px; color: #444; line-height: 9px; font-size: 7.600px; }
.hw.focus { border-color: #5b9bd1; height: 13px; }
.keyi { width: 10px; height: 11px; margin-left: 5px; }
.secs {
  height: var(--g2);
  margin-top: 8px;
  padding: 5px 0 0 21px;
  display: grid;
  grid-template-columns: repeat(4, var(--pitch));
  grid-auto-rows: var(--sr);
  align-items: center;
}
.secs .legend { font-size: 8.500px; font-weight: 700; letter-spacing: -.4px; color: #222; top: -6px; }
.code-g { height: var(--g3); margin-top: 8px; padding: 7px 0 0 10px; }
.code-g .ck { height: 10px; color: #666; }
.code-row { display: flex; gap: 7px; margin-top: 3px; }
.mono {
  position: relative;
  width: 270px;
  height: 59px;
  padding: 3px 0 0 2px;
  border: 1px solid #808080;
  font: 6.200px/7px "Liberation Mono", monospace;
  color: #555;
}
.yx-b .mono { width: 267px; }
.vs { position: absolute; right: 0; top: 0; bottom: 0; width: 10px; background: #fff; border-left: 1px solid #e3e3e3; display: flex; flex-direction: column; justify-content: space-between; padding: 3px 0; }
.vs svg { width: 8px; height: 6px; }
.tools { display: flex; flex-direction: column; gap: 5px; padding-top: 0; }
.tools svg { width: 10px; height: 10px; }
.yx-btns { display: flex; gap: 16px; padding: var(--bt) 0 0 calc(var(--bl) - 8px); }
.yx-btns button { width: var(--bw); height: var(--bh); background: #dcdcdc; border: 1px solid #8e8e8e; font-weight: 700; font-size: 8px; }
.yx-btns .def { border-color: #6fa8d4; }

/* ok */
.ok { left: 146px; top: 377px; width: 256px; height: 103px; }
.ok-body {
  flex: 1;
  margin: 0 4px 4px;
  background: #f0f0f0;
  display: grid;
  grid-template-columns: 60px 1fr;
  position: relative;
  padding: 14px 0 0 9px;
  justify-items: start;
  align-content: start;
}
.info { width: 20px; height: 20px; }
.ok-msg { margin: -7px 0 0 28px; font: 400 22.500px/30px "Liberation Serif", "Noto Sans CJK SC", serif; color: #f00; white-space: nowrap; letter-spacing: -.4px; }
.ok-btn {
  position: absolute;
  left: 97px;
  bottom: 0;
  width: 60px;
  height: 17px;
  background: #efefef;
  border: 1px solid #a0a0a0;
  border-bottom: 2px solid #777;
  outline: 1px dotted #555;
  outline-offset: -3px;
  font: 400 19.500px/14px "Liberation Sans", sans-serif;
  overflow: hidden;
  color: #000;
}
.ok-btn span { display: block; }

/* like */
.like {
  display: flex;
  align-items: center;
  justify-content: center;
  width: 80px;
  height: 80px;
  margin: 60px 0 0 400px;
  border: 0;
  border-radius: 50%;
  background: #5284bf;
}
.like svg { width: 25px; height: 25px; }
```
